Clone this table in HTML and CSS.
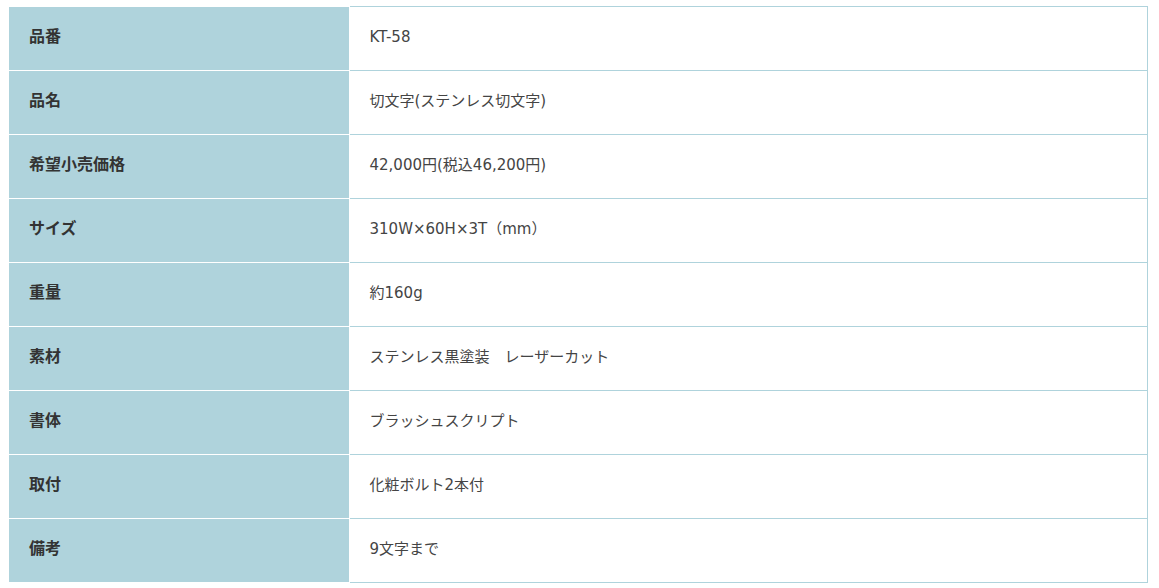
FILE: index.html
```html
<!DOCTYPE html>
<html lang="ja">
<head>
<meta charset="utf-8">
<title>仕様</title>
<link rel="stylesheet" href="styles.css">
</head>
<body>
<table class="spec">
  <tbody>
    <tr><th>品番</th><td>KT-58</td></tr>
    <tr><th>品名</th><td>切文字(ステンレス切文字)</td></tr>
    <tr><th>希望小売価格</th><td>42,000円(税込46,200円)</td></tr>
    <tr><th>サイズ</th><td>310W×60H×3T（mm）</td></tr>
    <tr><th>重量</th><td>約160g</td></tr>
    <tr><th>素材</th><td>ステンレス黒塗装　レーザーカット</td></tr>
    <tr><th>書体</th><td>ブラッシュスクリプト</td></tr>
    <tr><th>取付</th><td>化粧ボルト2本付</td></tr>
    <tr><th>備考</th><td>9文字まで</td></tr>
  </tbody>
</table>
</body>
</html>
```

FILE: styles.css
```css
html, body {
  margin: 0;
  padding: 0;
  background: #fff;
}
body {
  font-family: "DejaVu Sans", "Noto Sans CJK JP", sans-serif;
  font-size: 15px;
  color: #333;
}
.spec {
  margin: 6px 0 0 9px;
  width: 1139px;
  border-collapse: collapse;
  table-layout: fixed;
}
.spec th,
.spec td {
  height: 64px;
  padding: 0 20px;
  box-sizing: border-box;
  text-align: left;
  vertical-align: middle;
  line-height: 1.5;
}
.spec th {
  width: 340px;
  padding-bottom: 8px;
  background: #afd3dc;
  font-family: "Noto Sans CJK JP", sans-serif;
  font-size: 16px;
  font-weight: bold;
  color: #333;
  border-top: 1px solid #fff;
  border-bottom: 1px solid #fff;
  border-right: 1px solid #fff;
}
.spec td {
  padding-bottom: 2px;
  border: 1px solid #afd3dc;
  font-weight: normal;
  color: #444;
}
```
